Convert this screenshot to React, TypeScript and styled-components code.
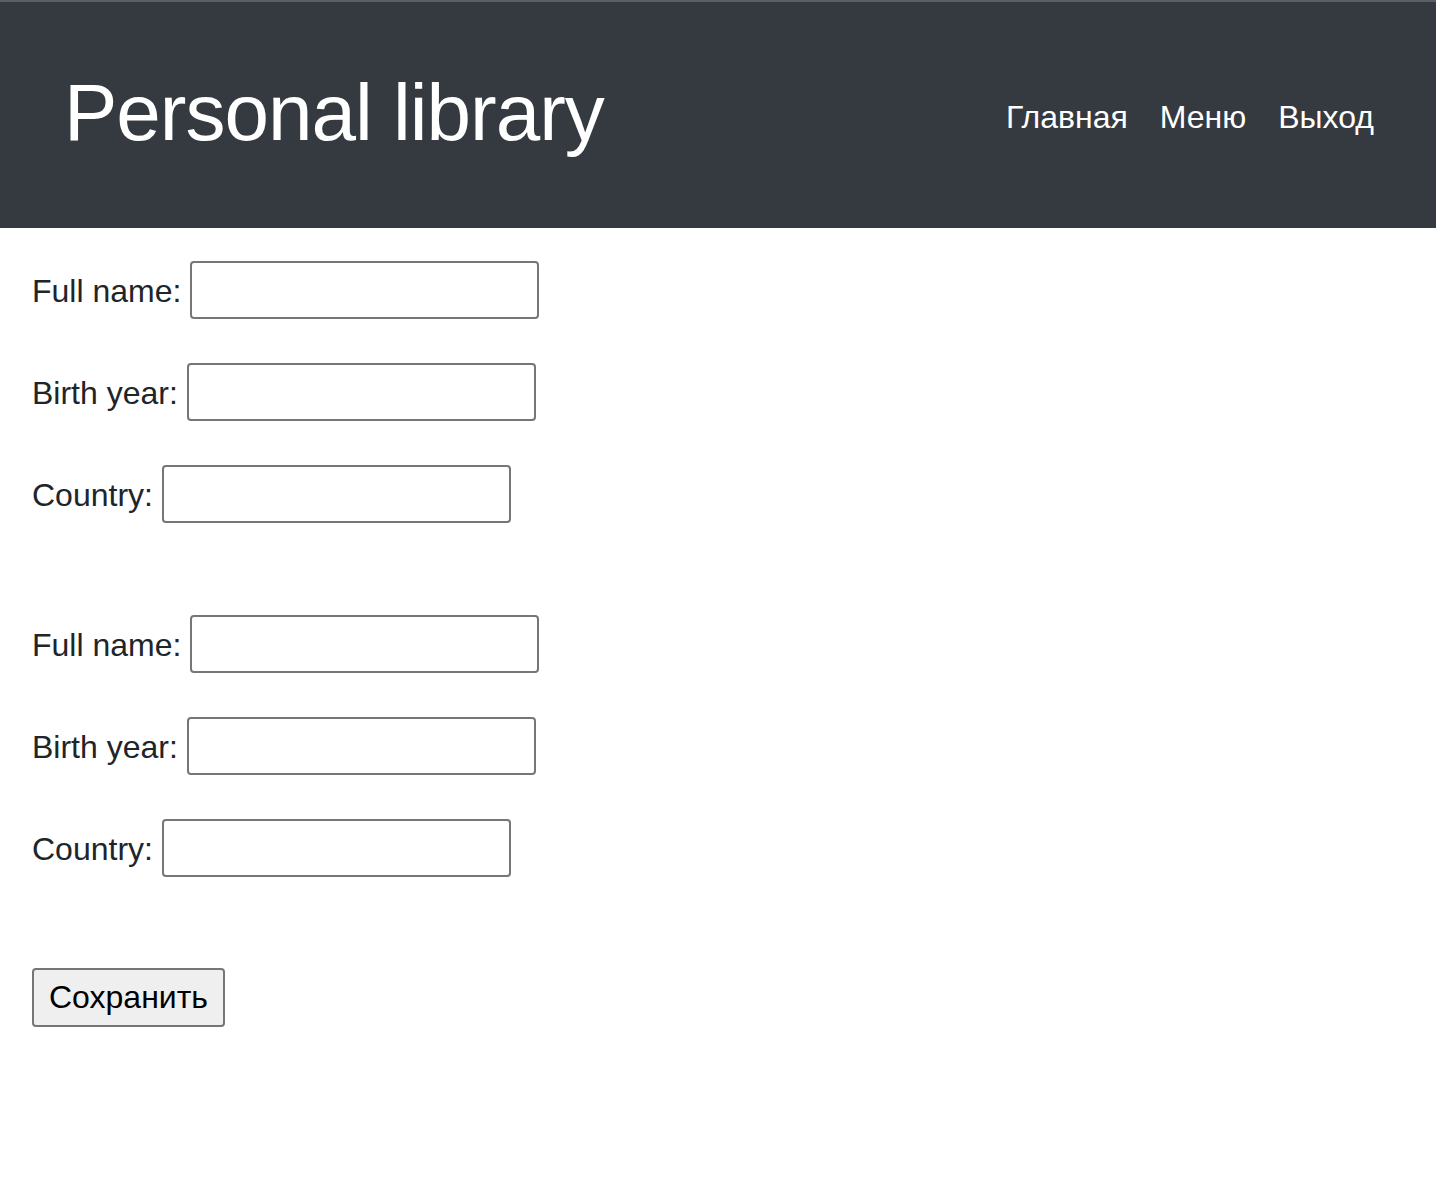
import React from "react";
import styled, { createGlobalStyle } from "styled-components";

const Global = createGlobalStyle`
  html, body { margin: 0; padding: 0; background: #fff; }
  body { font-family: "Liberation Sans", Arial, sans-serif; color: #212529; }
`;

const Header = styled.header`
  height: 228px;
  box-sizing: border-box;
  background: #343a40;
  border-top: 2px solid #5b5f64;
  display: flex;
  align-items: center;
  justify-content: space-between;
  padding: 0 46px 0 64px;
`;

const Title = styled.h1`
  margin: 0;
  font-size: 80px;
  font-weight: 500;
  letter-spacing: -1px;
  color: #fff;
  line-height: 1.2;
  padding-bottom: 4px;
`;

const Nav = styled.nav`
  display: flex;
  align-items: center;
  padding-top: 4px;
`;

const NavLink = styled.a`
  color: #fff;
  text-decoration: none;
  font-size: 32px;
  padding: 0 16px;
  line-height: 1.5;
`;

const Main = styled.main`
  padding: 33px 32px 0;
  display: flex;
  flex-direction: column;
`;

const Group = styled.div`
  display: flex;
  flex-direction: column;
  gap: 44px;
  margin-bottom: ${(p: { $last?: boolean }) => (p.$last ? "91px" : "92px")};
`;

const Field = styled.label`
  display: flex;
  align-items: center;
  font-size: 32px;
  line-height: 1;
  color: #212529;
`;

const LabelText = styled.span`
  margin-right: 9px;
  padding-top: 2px;
`;

const Input = styled.input`
  width: 349px;
  height: 58px;
  box-sizing: border-box;
  border: 2px solid #767676;
  border-radius: 4px;
  background: #fff;
  font-size: 26px;
  padding: 2px 4px;
  outline: none;
`;

const Button = styled.button`
  align-self: flex-start;
  width: 193px;
  height: 59px;
  box-sizing: border-box;
  background: #efefef;
  border: 2px solid #767676;
  border-radius: 4px;
  font-family: "Liberation Sans", Arial, sans-serif;
  font-size: 32px;
  color: #000;
  padding: 0 12px;
  cursor: pointer;
`;

const fields = ["Full name:", "Birth year:", "Country:"];

export default function App() {
  return (
    <>
      <Global />
      <Header>
        <Title>Personal library</Title>
        <Nav>
          <NavLink href="#">Главная</NavLink>
          <NavLink href="#">Меню</NavLink>
          <NavLink href="#">Выход</NavLink>
        </Nav>
      </Header>
      <Main>
        {[0, 1].map((g) => (
          <Group key={g} $last={g === 1}>
            {fields.map((f) => (
              <Field key={f}>
                <LabelText>{f}</LabelText>
                <Input type="text" />
              </Field>
            ))}
          </Group>
        ))}
        <Button type="button">Сохранить</Button>
      </Main>
    </>
  );
}
